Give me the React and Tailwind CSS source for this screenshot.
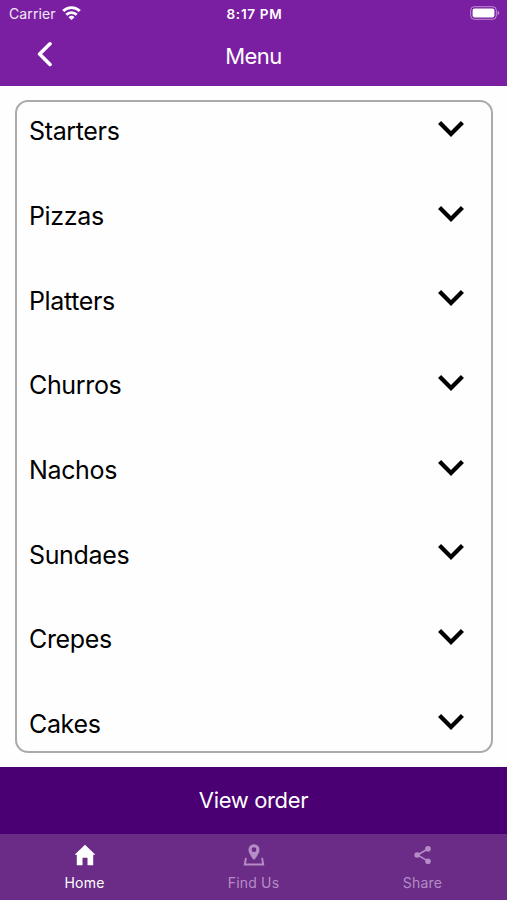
const categories = ['Starters', 'Pizzas', 'Platters', 'Churros', 'Nachos', 'Sundaes', 'Crepes', 'Cakes']

function WifiIcon() {
  return (
    <svg className="w-[19px] h-[14px]" viewBox="0 0 19 14" fill="none" stroke="currentColor" strokeWidth="2.9">
      <path d="M1.2 5a11.8 11.8 0 0 1 16.6 0" />
      <path d="M4.3 8.8a7.4 7.4 0 0 1 10.4 0" />
      <path d="M9.5 14L6.5 11.2a4 4 0 0 1 6 0z" fill="currentColor" stroke="none" />
    </svg>
  )
}

function BatteryIcon() {
  return (
    <svg className="w-[30px] h-[14px]" viewBox="0 0 30 14" fill="none">
      <rect x="0.7" y="0.7" width="25.6" height="12.6" rx="3.6" stroke="white" strokeOpacity="0.5" />
      <rect x="2.6" y="2.6" width="21.8" height="8.8" rx="1.8" fill="white" />
      <path d="M27.6 4.8v4.4c1-.4 1.6-1.2 1.6-2.2s-.6-1.8-1.6-2.2z" fill="white" fillOpacity="0.5" />
    </svg>
  )
}

function StatusBar() {
  return (
    <div className="grid grid-cols-3 items-center h-7 pl-[9px] pr-[7px]">
      <div className="flex items-center gap-[6px] text-[14px] tracking-[0.1px] text-white/90 -mt-0.5">
        <span>Carrier</span>
        <span className="text-white"><WifiIcon /></span>
      </div>
      <span className="text-center text-[13.5px] font-semibold tracking-[0.7px]">8:17 PM</span>
      <div className="flex justify-end -mt-0.5"><BatteryIcon /></div>
    </div>
  )
}

function Header() {
  return (
    <header className="h-[86px] shrink-0 bg-[#7b1fa2] text-white">
      <StatusBar />
      <div className="grid grid-cols-3 items-center h-[52px]">
        <button className="ml-9 w-4 h-[26px]" aria-label="Back">
          <svg className="w-4 h-[26px]" viewBox="0 0 16 26" fill="none" stroke="currentColor" strokeWidth="3.6" strokeLinecap="round" strokeLinejoin="round">
            <path d="M14 2.8L3.6 13 14 23.4" />
          </svg>
        </button>
        <h1 className="text-center text-[22px] leading-7 tracking-[-0.5px] mt-[3px]">Menu</h1>
      </div>
    </header>
  )
}

function CategoryRow({ name }) {
  return (
    <li className="flex items-start justify-between h-[84.67px] pl-3 pr-[27px]">
      <span className="text-[25px] leading-[30px] tracking-[-0.35px] mt-[14.3px]">{name}</span>
      <svg className="w-[26px] h-4 mt-[19px]" viewBox="6 8.59 12 7.41" fill="currentColor">
        <path d="M16.59 8.59L12 13.17 7.41 8.59 6 10l6 6 6-6z" />
      </svg>
    </li>
  )
}

function HomeIcon() {
  return (
    <svg className="w-[22px] h-[22px]" viewBox="0 0 22 22" fill="currentColor">
      <path d="M11 0.8L0.6 10.7h2.2v10.5h5.7v-7.4h5v7.4h5.7V10.7h2.2z" />
    </svg>
  )
}

function FindUsIcon() {
  return (
    <svg className="w-[22px] h-[24px]" viewBox="0 0 22 24" fill="none">
      <path
        fillRule="evenodd"
        clipRule="evenodd"
        fill="currentColor"
        d="M11 1.2a5.5 5.5 0 0 0-5.5 5.5c0 4.2 5.5 10.3 5.5 10.3s5.5-6.1 5.5-10.3A5.5 5.5 0 0 0 11 1.2zm0 3.1a2.4 2.4 0 1 1 0 4.8 2.4 2.4 0 0 1 0-4.8z"
      />
      <path d="M3.6 15.8H2.8l-1 5.7h18.4l-1-5.7H18.4" stroke="currentColor" strokeWidth="1.9" />
    </svg>
  )
}

function ShareIcon() {
  return (
    <svg className="w-[18px] h-5" viewBox="0 0 18 20" fill="currentColor">
      <path d="M14.5 3.5L3.5 10l11 6.4" fill="none" stroke="currentColor" strokeWidth="1.6" />
      <circle cx="14" cy="3.7" r="2.8" />
      <circle cx="3.2" cy="10" r="2.8" />
      <circle cx="14" cy="16.3" r="2.8" />
    </svg>
  )
}

const tabs = [
  { label: 'Home', icon: <HomeIcon />, active: true },
  { label: 'Find Us', icon: <FindUsIcon /> },
  { label: 'Share', icon: <ShareIcon /> },
]

function TabBar() {
  return (
    <nav className="grid grid-cols-3 h-[66px] shrink-0 bg-[#6a2c87]">
      {tabs.map((tab) => (
        <button
          key={tab.label}
          className={`flex flex-col items-center pt-2 ${tab.active ? 'text-white' : 'text-[#b58cc6]'}`}
        >
          <span className="flex items-center justify-center h-[26px]">{tab.icon}</span>
          <span className="text-[14px] leading-[18px] mt-[6px] tracking-[0.2px]">{tab.label}</span>
        </button>
      ))}
    </nav>
  )
}

export default function App() {
  return (
    <div className="flex flex-col h-screen overflow-hidden bg-[#fefefe] font-['Inter',sans-serif] text-black">
      <Header />
      <main className="flex-1 min-h-0 pl-[15px] pr-[14px] pt-[14px] pb-[14px]">
        <ul className="h-full overflow-hidden rounded-[13px] border-2 border-[#aaaaaa]">
          {categories.map((name) => (
            <CategoryRow key={name} name={name} />
          ))}
        </ul>
      </main>
      <button className="h-[67px] shrink-0 bg-[#4a0072] text-white text-[22px] tracking-[-0.35px]">View order</button>
      <TabBar />
    </div>
  )
}
